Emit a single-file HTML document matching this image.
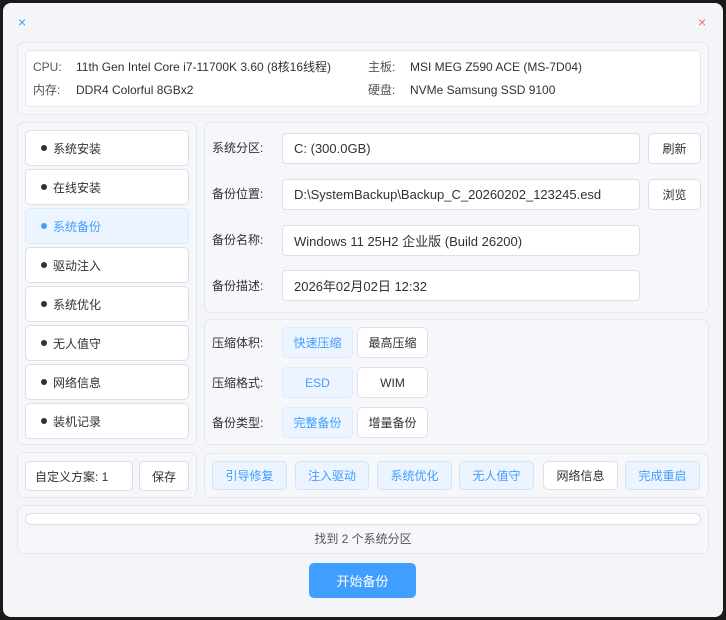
<!DOCTYPE html>
<html><head><meta charset="utf-8"><style>
*{box-sizing:border-box;margin:0;padding:0}
body{width:726px;height:620px;background:#1a1a1a;font-family:"Liberation Sans","Noto Sans CJK SC",sans-serif;font-size:12px;color:#303133;position:relative;overflow:hidden}
.win{position:absolute;left:3px;top:3px;width:720px;height:614px;background:#f3f5f8;border-radius:8px}
.a{position:absolute}
.panel{position:absolute;background:#f5f7fa;border:1px solid #e4e7ed;border-radius:7px}
.box{position:absolute;background:#fff;border:1px solid #dcdfe6;border-radius:5px}
.t{position:absolute;white-space:nowrap;line-height:16px}
.btn{position:absolute;background:#fff;border:1px solid #dcdfe6;border-radius:5px;display:flex;align-items:center;justify-content:center;white-space:nowrap}
.on{background:#ecf5ff;color:#409eff;border-color:#d9ecff}
.act{background:#ecf5ff;color:#409eff;border-color:#d0e3f7}
.nav{position:absolute;left:25px;width:164px;height:36px;background:#fff;border:1px solid #dcdfe6;border-radius:5px;padding-left:15px;display:flex;align-items:center}
.nav::before{content:"";width:6px;height:6px;border-radius:50%;background:#303133;margin-right:6px}
.nav.sel{background:#ecf5ff;color:#409eff;border-color:#d9ecff}
.nav.sel::before{background:#409eff}
.inp{position:absolute;left:282px;width:358px;height:31px;background:#fff;border:1px solid #dcdfe6;border-radius:4px;padding-left:11px;display:flex;align-items:center;font-size:13px}
.lb{color:#555}
</style></head><body>
<div class="win"></div>
<div class="t" style="left:18px;top:14px;color:#409eff;font-size:14px">×</div>
<div class="t" style="left:698px;top:14px;color:#f56c6c;font-size:14px">×</div>

<div class="panel" style="left:17px;top:42px;width:692px;height:73px"></div>
<div class="box" style="left:25px;top:50px;width:676px;height:57px;border-color:#e4e7ed"></div>
<div class="t lb" style="left:33px;top:59px">CPU:</div>
<div class="t" style="left:76px;top:59px">11th Gen Intel Core i7-11700K 3.60 (8核16线程)</div>
<div class="t lb" style="left:33px;top:82px">内存:</div>
<div class="t" style="left:76px;top:82px">DDR4 Colorful 8GBx2</div>
<div class="t lb" style="left:368px;top:59px">主板:</div>
<div class="t" style="left:410px;top:59px">MSI MEG Z590 ACE (MS-7D04)</div>
<div class="t lb" style="left:368px;top:82px">硬盘:</div>
<div class="t" style="left:410px;top:82px">NVMe Samsung SSD 9100</div>

<div class="panel" style="left:17px;top:122px;width:180px;height:323px"></div>
<div class="nav" style="top:130px">系统安装</div>
<div class="nav" style="top:169px">在线安装</div>
<div class="nav sel" style="top:208px">系统备份</div>
<div class="nav" style="top:247px">驱动注入</div>
<div class="nav" style="top:286px">系统优化</div>
<div class="nav" style="top:325px">无人值守</div>
<div class="nav" style="top:364px">网络信息</div>
<div class="nav" style="top:403px">装机记录</div>

<div class="panel" style="left:204px;top:122px;width:505px;height:191px"></div>
<div class="t" style="left:212px;top:140px">系统分区:</div>
<div class="inp" style="top:133px">C: (300.0GB)</div>
<div class="btn" style="left:648px;top:133px;width:53px;height:31px">刷新</div>
<div class="t" style="left:212px;top:186px">备份位置:</div>
<div class="inp" style="top:179px">D:\SystemBackup\Backup_C_20260202_123245.esd</div>
<div class="btn" style="left:648px;top:179px;width:53px;height:31px">浏览</div>
<div class="t" style="left:212px;top:232px">备份名称:</div>
<div class="inp" style="top:225px">Windows 11 25H2 企业版 (Build 26200)</div>
<div class="t" style="left:212px;top:278px">备份描述:</div>
<div class="inp" style="top:270px">2026年02月02日 12:32</div>

<div class="panel" style="left:204px;top:319px;width:505px;height:126px"></div>
<div class="t" style="left:212px;top:335px">压缩体积:</div>
<div class="btn on" style="left:282px;top:327px;width:71px;height:31px">快速压缩</div>
<div class="btn" style="left:357px;top:327px;width:71px;height:31px">最高压缩</div>
<div class="t" style="left:212px;top:375px">压缩格式:</div>
<div class="btn on" style="left:282px;top:367px;width:71px;height:31px">ESD</div>
<div class="btn" style="left:357px;top:367px;width:71px;height:31px">WIM</div>
<div class="t" style="left:212px;top:415px">备份类型:</div>
<div class="btn on" style="left:282px;top:407px;width:71px;height:31px">完整备份</div>
<div class="btn" style="left:357px;top:407px;width:71px;height:31px">增量备份</div>

<div class="panel" style="left:17px;top:452px;width:180px;height:46px"></div>
<div class="box" style="left:25px;top:461px;width:108px;height:30px;padding-left:9px;display:flex;align-items:center">自定义方案: 1</div>
<div class="btn" style="left:139px;top:461px;width:50px;height:30px">保存</div>

<div class="panel" style="left:204px;top:453px;width:505px;height:45px"></div>
<div class="btn act" style="left:212px;top:461px;width:75px;height:29px">引导修复</div>
<div class="btn act" style="left:295px;top:461px;width:74px;height:29px">注入驱动</div>
<div class="btn act" style="left:377px;top:461px;width:75px;height:29px">系统优化</div>
<div class="btn act" style="left:459px;top:461px;width:75px;height:29px">无人值守</div>
<div class="btn" style="left:543px;top:461px;width:75px;height:29px">网络信息</div>
<div class="btn act" style="left:625px;top:461px;width:75px;height:29px">完成重启</div>

<div class="panel" style="left:17px;top:505px;width:692px;height:49px"></div>
<div class="a" style="left:25px;top:513px;width:676px;height:12px;background:#fff;border:1px solid #dcdfe6;border-radius:6px"></div>
<div class="t" style="left:0;width:726px;text-align:center;top:531px;color:#555">找到 2 个系统分区</div>

<div class="btn" style="left:309px;top:563px;width:107px;height:35px;background:#409eff;border-color:#409eff;color:#fff;font-size:13px">开始备份</div>
</body></html>
